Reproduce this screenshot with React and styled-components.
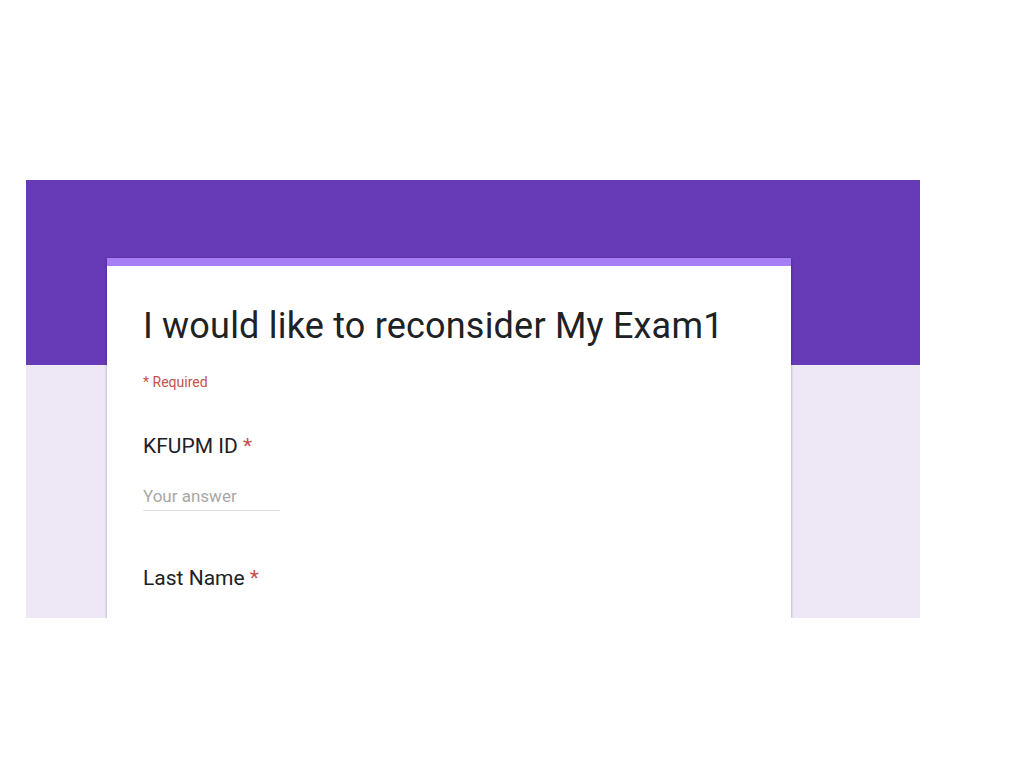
import React from "react";
import styled, { createGlobalStyle } from "styled-components";

const Global = createGlobalStyle`
  html, body { margin: 0; padding: 0; background: #ffffff; }
  body { font-family: Roboto, "Noto Sans", Arial, sans-serif; }
`;

const Page = styled.div`
  width: 1024px;
  height: 768px;
  padding: 180px 0 0 26px;
  box-sizing: border-box;
`;

const Frame = styled.div`
  width: 894px;
  height: 438px;
  overflow: hidden;
  background: linear-gradient(to bottom, #673ab7 0, #673ab7 185px, #ede7f6 185px);
  padding: 78px 0 0 81px;
  box-sizing: border-box;
`;

const Card = styled.div`
  width: 684px;
  min-height: 500px;
  background: #ffffff;
  border-top: 8px solid #a67ff4;
  box-shadow: 0 1px 3px rgba(0, 0, 0, 0.25), 0 0 1px rgba(0, 0, 0, 0.15);
  padding: 38px 36px 0 36px;
  box-sizing: border-box;
`;

const Title = styled.h1`
  margin: 0;
  font-family: Roboto, "Noto Sans", Arial, sans-serif;
  font-weight: 400;
  font-size: 36px;
  line-height: 44px;
  color: #202124;
  letter-spacing: 0.2px;
`;

const RequiredNote = styled.div`
  margin-top: 25px;
  font-size: 14px;
  line-height: 18px;
  color: #c5524f;
`;

const Question = styled.div`
  margin-top: ${(p) => p.$top}px;
`;

const Label = styled.div`
  font-size: 21px;
  line-height: 24px;
  color: #202124;
`;

const Star = styled.span`
  color: #c5524f;
`;

const Answer = styled.div`
  margin-top: 29px;
  width: 137px;
  padding-bottom: 5px;
  border-bottom: 1px solid #e0e0e0;
  font-size: 17px;
  line-height: 18px;
  color: #a8a8a8;
`;

export default function App() {
  return (
    <>
      <Global />
      <Page>
        <Frame>
          <Card>
            <Title>I would like to reconsider My Exam1</Title>
            <RequiredNote>* Required</RequiredNote>
            <Question $top={43}>
              <Label>
                KFUPM ID <Star>*</Star>
              </Label>
              <Answer>Your answer</Answer>
            </Question>
            <Question $top={55}>
              <Label>
                Last Name <Star>*</Star>
              </Label>
            </Question>
          </Card>
        </Frame>
      </Page>
    </>
  );
}
